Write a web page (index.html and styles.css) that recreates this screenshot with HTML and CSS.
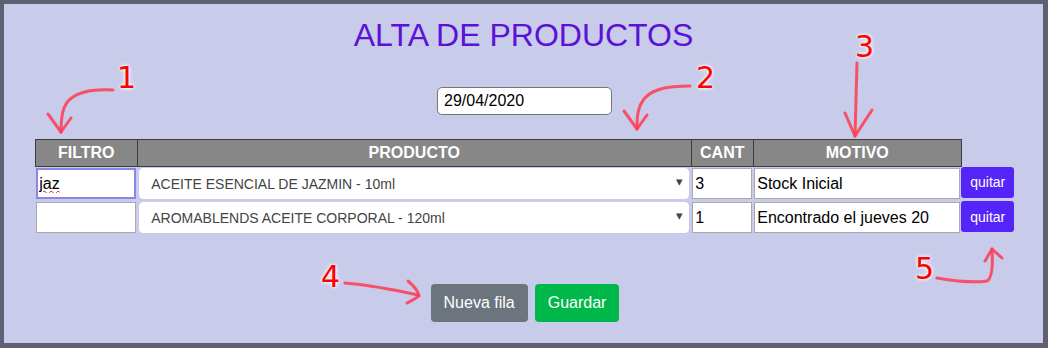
FILE: index.html
```html
<!DOCTYPE html>
<html lang="es">
<head>
    <meta charset="UTF-8">
    <title>Alta de productos</title>
    <link rel="stylesheet" href="styles.css">
</head>
<body>
    <div class="frame">
        <h1 class="title">ALTA DE PRODUCTOS</h1>

        <div class="date-row">
            <input type="text" class="date" value="29/04/2020">
        </div>

        <table class="products">
            <colgroup>
                <col class="col-filtro">
                <col class="col-producto">
                <col class="col-cant">
                <col class="col-motivo">
                <col class="col-quitar">
            </colgroup>
            <thead>
                <tr>
                    <th>FILTRO</th>
                    <th>PRODUCTO</th>
                    <th>CANT</th>
                    <th>MOTIVO</th>
                    <th class="blank"></th>
                </tr>
            </thead>
            <tbody>
                <tr>
                    <td><input type="text" class="field filter focused" value="jaz"></td>
                    <td>
                        <div class="select-wrap">
                            <select class="product">
                                <option>ACEITE ESENCIAL DE JAZMIN - 10ml</option>
                            </select>
                        </div>
                    </td>
                    <td><input type="text" class="field" value="3"></td>
                    <td><input type="text" class="field" value="Stock Inicial"></td>
                    <td><button class="remove">quitar</button></td>
                </tr>
                <tr>
                    <td><input type="text" class="field filter" value=""></td>
                    <td>
                        <div class="select-wrap">
                            <select class="product">
                                <option>AROMABLENDS ACEITE CORPORAL - 120ml</option>
                            </select>
                        </div>
                    </td>
                    <td><input type="text" class="field" value="1"></td>
                    <td><input type="text" class="field" value="Encontrado el jueves 20"></td>
                    <td><button class="remove">quitar</button></td>
                </tr>
            </tbody>
        </table>

        <div class="actions">
            <button class="btn btn-grey">Nueva fila</button>
            <button class="btn btn-green">Guardar</button>
        </div>

        <!-- hand-drawn notes over the screenshot -->
        <div class="notes">
            <span class="num n1">1</span>
            <span class="num n2">2</span>
            <span class="num n3">3</span>
            <span class="num n4">4</span>
            <span class="num n5">5</span>
            <svg class="arrows" width="1048" height="348" viewBox="0 0 1048 348">
                <g fill="none" stroke="#ff3b52" stroke-width="3" stroke-linecap="round" stroke-linejoin="round" stroke-opacity="0.85">
                    <path d="M113 90 C 90 89, 70 92, 64 108 C 61 116, 61 124, 61 132"/>
                    <path d="M48 114 L61 132 L71 118"/>
                    <path d="M690 86 C 670 86, 650 88, 642 102 C 637 110, 637 120, 637 129"/>
                    <path d="M624 111 L637 129 L647 115"/>
                    <path d="M857 63 L855 136"/>
                    <path d="M845 113 L855 136 L872 110"/>
                    <path d="M345 283 C 370 285, 395 290, 418 295"/>
                    <path d="M408 281 C 414 286, 418 291, 419 296 C 415 299, 411 301, 407 303"/>
                    <path d="M937 278 C 955 281, 975 283, 987 281 C 992 278, 993 265, 992 249"/>
                    <path d="M985 261 L992 249 L1002 258"/>
                </g>
            </svg>
        </div>
    </div>
</body>
</html>
```

FILE: styles.css
```css
body {
    margin: 0;
    padding: 0;
    font-family: "Liberation Sans", Arial, sans-serif;
}

.frame {
    position: relative;
    box-sizing: border-box;
    width: 1048px;
    height: 348px;
    border-style: solid;
    border-color: #5f6071;
    border-width: 4px 5px 5px 4px;
    background-color: #c8cbe9;
    overflow: hidden;
}

.title {
    margin: 13px 0 0;
    font-size: 32px;
    font-weight: normal;
    line-height: 37px;
    text-align: center;
    color: #5a12d6;
}

.date-row {
    display: flex;
    justify-content: center;
    margin-top: 33px;
    padding-left: 2px;
}

.date {
    box-sizing: border-box;
    width: 175px;
    height: 28px;
    padding: 1px 6px;
    border: 1px solid #767676;
    border-radius: 5px;
    background-color: #fff;
    font-family: "Liberation Sans", Arial, sans-serif;
    font-size: 16px;
    color: #000;
}

.products {
    margin: 24px auto 0;
    border-collapse: collapse;
    table-layout: fixed;
    width: 979px;
    position: relative;
    left: 1px;
}

.col-filtro { width: 102px; }
.col-producto { width: 554px; }
.col-cant { width: 62px; }
.col-motivo { width: 208px; }
.col-quitar { width: 53px; }

.products th {
    height: 26px;
    padding: 0;
    border: 1px solid #3d3d3d;
    background-color: #878787;
    color: #fff;
    font-size: 16px;
    font-weight: bold;
    text-align: center;
    line-height: 18px;
}

.products th.blank {
    border: none;
    border-left: 1px solid #3d3d3d;
    background: none;
}

.products td {
    padding: 1px 1px 2px;
    vertical-align: top;
}

.field {
    box-sizing: border-box;
    width: 100%;
    height: 31px;
    padding: 1px 2px;
    border: 1px solid #a9a9a9;
    background-color: #fff;
    font-family: "Liberation Sans", Arial, sans-serif;
    font-size: 16px;
    color: #000;
}

.field.focused {
    border: 2px solid #8a86e6;
    padding: 0 1px;
    text-decoration: underline wavy #e02020;
    text-decoration-thickness: 1px;
}

.select-wrap {
    position: relative;
    margin: 0 1px;
}

.select-wrap::after {
    content: "\25BE";
    position: absolute;
    right: 6px;
    top: 6px;
    font-size: 13px;
    color: #444;
    pointer-events: none;
}

.product {
    -webkit-appearance: none;
    appearance: none;
    box-sizing: border-box;
    width: 100%;
    height: 31px;
    padding: 0 20px 0 11px;
    border: 1px solid #fff;
    border-radius: 4px;
    background-color: #fff;
    font-family: "Liberation Sans", Arial, sans-serif;
    font-size: 14px;
    color: #444;
}

.remove {
    box-sizing: border-box;
    width: 53px;
    height: 31px;
    margin: -1px 0 0 -1px;
    padding: 0;
    border: none;
    border-radius: 3px;
    background-color: #5524f8;
    color: #fff;
    font-family: "Liberation Sans", Arial, sans-serif;
    font-size: 14px;
    cursor: pointer;
}

.actions {
    display: flex;
    justify-content: center;
    gap: 7px;
    margin-top: 49px;
    padding-left: 3px;
}

.btn {
    height: 38px;
    padding: 0 12px;
    border: 1px solid transparent;
    border-radius: 4px;
    color: #fff;
    font-family: "Liberation Sans", Arial, sans-serif;
    font-size: 16px;
    cursor: pointer;
}

.btn-grey {
    background-color: #6c757d;
}

.btn-green {
    background-color: #00b84a;
}

.notes {
    position: absolute;
    top: -4px;
    left: -4px;
    width: 1048px;
    height: 348px;
    pointer-events: none;
}

.arrows {
    position: absolute;
    top: 0;
    left: 0;
}

.num {
    position: absolute;
    font-family: "DejaVu Sans", sans-serif;
    font-size: 30px;
    line-height: 30px;
    color: #ff0000;
    text-shadow: 0 0 3px #fff, 0 0 5px #fff;
}

.n1 { left: 117px; top: 63px; }
.n2 { left: 696px; top: 63px; }
.n3 { left: 855px; top: 32px; }
.n4 { left: 321px; top: 262px; }
.n5 { left: 915px; top: 254px; }
```
